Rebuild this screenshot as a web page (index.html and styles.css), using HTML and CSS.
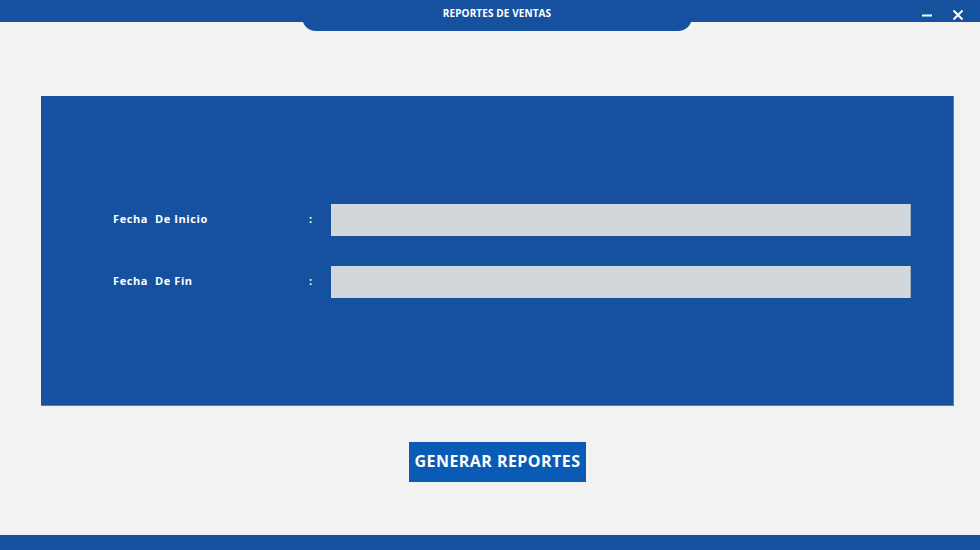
FILE: index.html
```html
<!DOCTYPE html>
<html lang="es">
<head>
<meta charset="utf-8">
<title>Reportes de Ventas</title>
<link rel="stylesheet" href="styles.css">
</head>
<body>
<div class="app">
  <header class="topbar">
    <div class="spacer"></div>
    <div class="tab">REPORTES DE VENTAS</div>
    <div class="controls">
      <span class="ctrl min"><svg width="12" height="12" viewBox="0 0 12 12"><path d="M1 6.5h10" stroke="#fff" stroke-width="2"/></svg></span>
      <span class="ctrl close"><svg width="12" height="12" viewBox="0 0 12 12"><path d="M1.5 1.5l9 9M10.5 1.5l-9 9" stroke="#fff" stroke-width="2"/></svg></span>
    </div>
  </header>
  <main class="content">
    <section class="panel">
      <div class="row">
        <label class="label">Fecha&nbsp; De Inicio</label>
        <span class="colon">:</span>
        <div class="input"></div>
      </div>
      <div class="row">
        <label class="label">Fecha&nbsp; De Fin</label>
        <span class="colon">:</span>
        <div class="input"></div>
      </div>
    </section>
    <div class="actions">
      <button class="btn">GENERAR REPORTES</button>
    </div>
  </main>
  <footer class="bottombar"></footer>
</div>
</body>
</html>
```

FILE: styles.css
```css
* { box-sizing: border-box; }
html, body { margin: 0; padding: 0; }
body {
  background: #f2f2f2;
  font-family: "Open Sans", "Noto Sans", sans-serif;
  width: 980px;
  height: 550px;
  overflow: hidden;
}
.app {
  display: flex;
  flex-direction: column;
  height: 550px;
}
.topbar {
  height: 22px;
  background: #1651a0;
  display: grid;
  grid-template-columns: 302px 390px 1fr;
  position: relative;
  z-index: 2;
}
.tab {
  height: 31px;
  background: #1651a0;
  border-radius: 0 0 14px 14px;
  color: #fff;
  font-size: 10px;
  font-weight: 700;
  letter-spacing: 0.1px;
  text-align: center;
  padding-top: 6px;
}
.controls {
  display: flex;
  justify-content: flex-end;
  align-items: center;
  gap: 19px;
  padding-right: 16px;
  padding-bottom: 1px;
}
.ctrl { display: flex; width: 12px; height: 12px; }
.content {
  flex: 1;
  padding-top: 74px;
}
.panel {
  margin-left: 41px;
  width: 913px;
  height: 310px;
  background: #1651a0;
  border-right: 1px solid #4f7fc0;
  border-bottom: 1px solid #4f7fc0;
  padding: 108px 42px 0 72px;
  display: flex;
  flex-direction: column;
  gap: 30px;
}
.row {
  display: flex;
  align-items: center;
  height: 32px;
}
.label {
  width: 196px;
  color: #fff;
  font-size: 11px;
  font-weight: 700;
  letter-spacing: 0.6px;
  padding-bottom: 4px;
}
.colon {
  width: 22px;
  color: #fff;
  font-size: 11px;
  font-weight: 700;
  padding-bottom: 4px;
}
.input {
  flex: 1;
  height: 32px;
  background: #d1d7da;
  border-right: 1px solid #9fb0c2;
}
.actions {
  display: flex;
  padding-top: 36px;
  padding-left: 409px;
}
.btn {
  width: 177px;
  height: 40px;
  background: #0a5bb6;
  border: none;
  color: #fff;
  font-family: "Open Sans", "Noto Sans", sans-serif;
  font-size: 16px;
  font-weight: 700;
  padding: 0 0 2px 0;
  letter-spacing: 0.45px;
}
.bottombar {
  height: 15px;
  background: #1651a0;
}
```
